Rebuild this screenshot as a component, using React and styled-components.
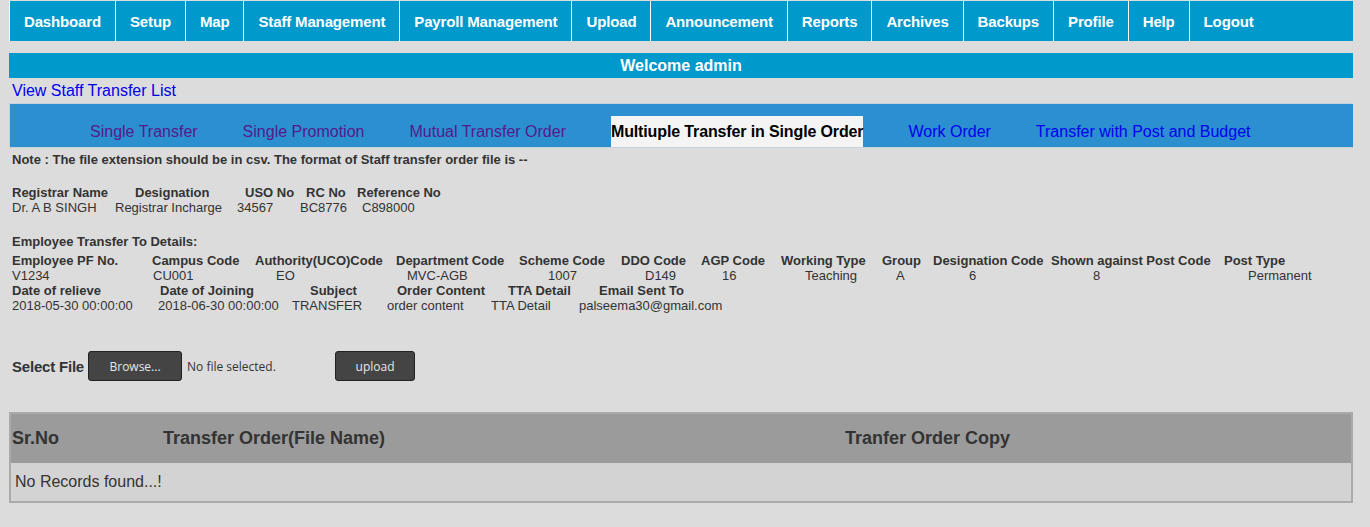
import React from "react";
import styled, { createGlobalStyle } from "styled-components";

const GlobalStyle = createGlobalStyle`
  html, body { margin: 0; padding: 0; background: #dcdcdc; }
  body { font-family: "Liberation Sans", Arial, sans-serif; color: #333; }
`;

const Page = styled.div`
  width: 1344px;
  padding: 1px 17px 0 9px;
`;

const Nav = styled.nav`
  display: flex;
  height: 40px;
  background: #0099cc;
  border-left: 1px solid #fff;
`;

const NavItem = styled.a`
  display: flex;
  align-items: center;
  padding: 0 14px;
  color: #fff;
  font-size: 15px;
  font-weight: bold;
  letter-spacing: -0.15px;
  text-decoration: none;
  white-space: nowrap;
  border-right: ${(p) => (p.$last ? "none" : "1px solid #fff")};
`;

const Welcome = styled.div`
  margin-top: 12px;
  height: 25px;
  line-height: 25px;
  background: #0099cc;
  color: #fff;
  font-size: 16px;
  font-weight: bold;
  text-align: center;
`;

const TopLink = styled.a`
  display: block;
  height: 25px;
  line-height: 25px;
  padding-left: 3px;
  font-size: 16px;
  color: #0000ee;
  text-decoration: none;
`;

const TabBar = styled.ul`
  display: flex;
  align-items: flex-end;
  gap: 45px;
  height: 43px;
  margin: 0;
  padding: 0 0 0 80px;
  list-style: none;
  background: #2b8fd0;
  border: 1px solid #c9d2da;
  border-right: none;
`;

const Tab = styled.li`
  height: 31px;
  line-height: 31px;
  font-size: 16px;
  white-space: nowrap;
  color: ${(p) => (p.$state === "visited" ? "#551a8b" : p.$state === "active" ? "#000" : "#0000ee")};
  font-weight: ${(p) => (p.$state === "active" ? "bold" : "normal")};
  letter-spacing: ${(p) => (p.$state === "active" ? "-0.13px" : "normal")};
  background: ${(p) => (p.$state === "active" ? "#f4f4f4" : "transparent")};
`;

const Info = styled.div`
  padding-left: 3px;
  font-size: 13px;
  line-height: 15px;
  color: #333;
`;

const Note = styled.div`
  margin-top: 4px;
  font-weight: bold;
`;

const SectionTitle = styled.div`
  margin-top: ${(p) => p.$gap}px;
  font-weight: bold;
`;

const FieldRow = styled.div`
  display: flex;
  margin-top: ${(p) => p.$gap || 0}px;
  font-weight: ${(p) => (p.$head ? "bold" : "normal")};
  white-space: nowrap;
`;

const Field = styled.span`
  flex: 0 0 ${(p) => (p.$w ? `${p.$w}px` : "auto")};
`;

const Fields = ({ items, head, gap }) => {
  const base = items[0][1];
  return (
    <FieldRow $head={head} $gap={gap}>
      {items.map(([text, x], i) => {
        const start = i === 0 ? base : x;
        const next = items[i + 1];
        const w = next ? next[1] - start : null;
        return (
          <Field key={i} $w={w}>
            {text}
          </Field>
        );
      })}
    </FieldRow>
  );
};

const FileRow = styled.div`
  display: flex;
  align-items: center;
  margin-top: 38px;
  padding-left: 3px;
  height: 30px;
`;

const FileLabel = styled.span`
  font-size: 15px;
  font-weight: bold;
  letter-spacing: -0.2px;
  color: #333;
  margin-right: 4px;
`;

const DarkButton = styled.button`
  width: ${(p) => p.$w}px;
  height: 30px;
  padding: 0;
  background: #444;
  border: 1px solid #222;
  border-radius: 3px;
  color: #e6e6e6;
  font-family: "Open Sans", sans-serif;
  font-size: 12px;
`;

const FileStatus = styled.span`
  width: 148px;
  padding-left: 5px;
  font-family: "Open Sans", sans-serif;
  font-size: 12px;
  color: #333;
`;

const Table = styled.table`
  width: 1344px;
  margin-top: 31px;
  border-collapse: separate;
  border-spacing: 0;
  border: 2px solid #aaa;
`;

const HeadCell = styled.th`
  width: ${(p) => (p.$w ? `${p.$w}px` : "auto")};
  height: 49px;
  padding: 0 0 0 1px;
  background: #9b9b9b;
  color: #333;
  font-size: 18px;
  font-weight: bold;
  text-align: left;
  box-sizing: border-box;
`;

const BodyCell = styled.td`
  height: 38px;
  padding: 0 0 0 4px;
  background: #d3d3d3;
  color: #333;
  font-size: 16px;
  box-sizing: border-box;
`;

const navItems = [
  "Dashboard", "Setup", "Map", "Staff Management", "Payroll Management", "Upload",
  "Announcement", "Reports", "Archives", "Backups", "Profile", "Help", "Logout",
];

const tabs = [
  ["Single Transfer", "visited"],
  ["Single Promotion", "visited"],
  ["Mutual Transfer Order", "visited"],
  ["Multiuple Transfer in Single Order", "active"],
  ["Work Order", "link"],
  ["Transfer with Post and Budget", "link"],
];

const regHead = [["Registrar Name", 12], ["Designation", 135], ["USO No", 245], ["RC No", 306], ["Reference No", 357]];
const regVal = [["Dr. A B SINGH", 12], ["Registrar Incharge", 115], ["34567", 237], ["BC8776", 300], ["C898000", 362]];

const empHead1 = [
  ["Employee PF No.", 12], ["Campus Code", 152], ["Authority(UCO)Code", 255], ["Department Code", 396],
  ["Scheme Code", 519], ["DDO Code", 621], ["AGP Code", 701], ["Working Type", 781], ["Group", 882],
  ["Designation Code", 933], ["Shown against Post Code", 1051], ["Post Type", 1224],
];
const empVal1 = [
  ["V1234", 12], ["CU001", 153], ["EO", 276], ["MVC-AGB", 407], ["1007", 548], ["D149", 645],
  ["16", 722], ["Teaching", 805], ["A", 896], ["6", 969], ["8", 1093], ["Permanent", 1248],
];
const empHead2 = [
  ["Date of relieve", 12], ["Date of Joining", 160], ["Subject", 310], ["Order Content", 397],
  ["TTA Detail", 508], ["Email Sent To", 599],
];
const empVal2 = [
  ["2018-05-30 00:00:00", 12], ["2018-06-30 00:00:00", 158], ["TRANSFER", 292], ["order content", 387],
  ["TTA Detail", 491], ["palseema30@gmail.com", 579],
];

export default function App() {
  return (
    <>
      <GlobalStyle />
      <Page>
        <Nav>
          {navItems.map((n, i) => (
            <NavItem key={n} $last={i === navItems.length - 1}>{n}</NavItem>
          ))}
        </Nav>
        <Welcome>Welcome admin</Welcome>
        <TopLink href="#">View Staff Transfer List</TopLink>
        <TabBar>
          {tabs.map(([t, s]) => (
            <Tab key={t} $state={s}>{t}</Tab>
          ))}
        </TabBar>
        <Info>
          <Note>Note : The file extension should be in csv. The format of Staff transfer order file is --</Note>
          <Fields items={regHead} head gap={18} />
          <Fields items={regVal} />
          <SectionTitle $gap={19}>Employee Transfer To Details:</SectionTitle>
          <Fields items={empHead1} head gap={4} />
          <Fields items={empVal1} />
          <Fields items={empHead2} head />
          <Fields items={empVal2} />
        </Info>
        <FileRow>
          <FileLabel>Select File</FileLabel>
          <DarkButton $w={94}>Browse...</DarkButton>
          <FileStatus>No file selected.</FileStatus>
          <DarkButton $w={80}>upload</DarkButton>
        </FileRow>
        <Table>
          <thead>
            <tr>
              <HeadCell $w={151}>Sr.No</HeadCell>
              <HeadCell $w={682}>Transfer Order(File Name)</HeadCell>
              <HeadCell>Tranfer Order Copy</HeadCell>
            </tr>
          </thead>
          <tbody>
            <tr>
              <BodyCell colSpan={3}>No Records found...!</BodyCell>
            </tr>
          </tbody>
        </Table>
      </Page>
    </>
  );
}
